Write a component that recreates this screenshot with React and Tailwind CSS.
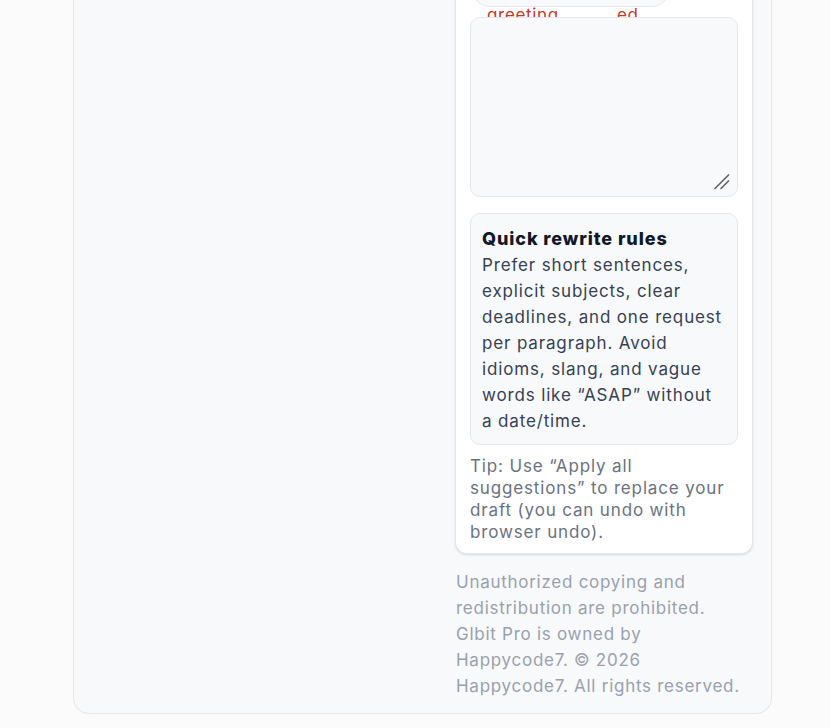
export default function App() {
  return (
    <div className="h-[728px] overflow-hidden bg-[#fbfbfc] font-['Inter',sans-serif]">
      <div className="ml-[73px] flex w-[699px] rounded-b-2xl border-x border-b border-gray-200 bg-[#f8f9fb] pb-[14px] pr-[17px]">
        {/* left column (scrolled past) */}
        <div className="w-[381px] shrink-0" />

        <div className="w-[298px] shrink-0">
          {/* Editor card */}
          <div className="rounded-b-xl border-x border-b border-gray-200 bg-white px-[14px] pb-[10px] shadow-sm">
            <div className="relative">
              <div className="-mt-[29px] ml-[2px] h-[36px] w-[198px] rounded-full border border-gray-200 bg-[#f8f9fb]" />
              <div className="absolute left-[17px] top-[32px] text-[17px] leading-[24px] tracking-[0.04em] text-[#c0392b]">greeting</div>
              <div className="absolute left-[147px] top-[32px] text-[17px] leading-[24px] tracking-[0.04em] text-[#c0392b]">ed</div>
            </div>

            <div className="relative z-10 mt-[10px]">
              <textarea
                className="block h-[180px] w-full resize-none rounded-[10px] border border-gray-200 bg-[#f8f9fb] p-3 text-[17px] outline-none"
                defaultValue=""
              />
              <svg className="absolute bottom-[7px] right-[8px]" width="17" height="17" viewBox="0 0 17 17">
                <path d="M15.5 2 L2 15.5 M15.5 8 L8 15.5" stroke="#666" strokeWidth="1.7" strokeLinecap="round" />
              </svg>
            </div>

            {/* Rules */}
            <div className="mt-[16px] rounded-[10px] border border-gray-200 bg-[#f8f9fb] px-[11px] pb-[10px] pt-[12px]">
              <div className="text-[18px] font-extrabold leading-[26px] tracking-[0.05em] text-gray-900">Quick rewrite rules</div>
              <p className="text-[17px] leading-[26px] tracking-[0.05em] text-gray-700">
                Prefer short sentences, explicit subjects, clear deadlines, and one request per paragraph. Avoid
                idioms, slang, and vague words like “ASAP” without a date/time.
              </p>
            </div>

            <p className="mt-[10px] text-[17px] leading-[22px] tracking-[0.05em] text-gray-500">
              Tip: Use “Apply all suggestions” to replace your draft (you can undo with browser undo).
            </p>
          </div>

          {/* Footer */}
          <p className="mt-[15px] whitespace-nowrap pl-px text-[17px] leading-[26px] tracking-[0.043em] text-gray-400">
            Unauthorized copying and
            <br />
            redistribution are prohibited.
            <br />
            Glbit Pro is owned by
            <br />
            Happycode7. © 2026
            <br />
            Happycode7. All rights reserved.
          </p>
        </div>
      </div>
    </div>
  );
}
